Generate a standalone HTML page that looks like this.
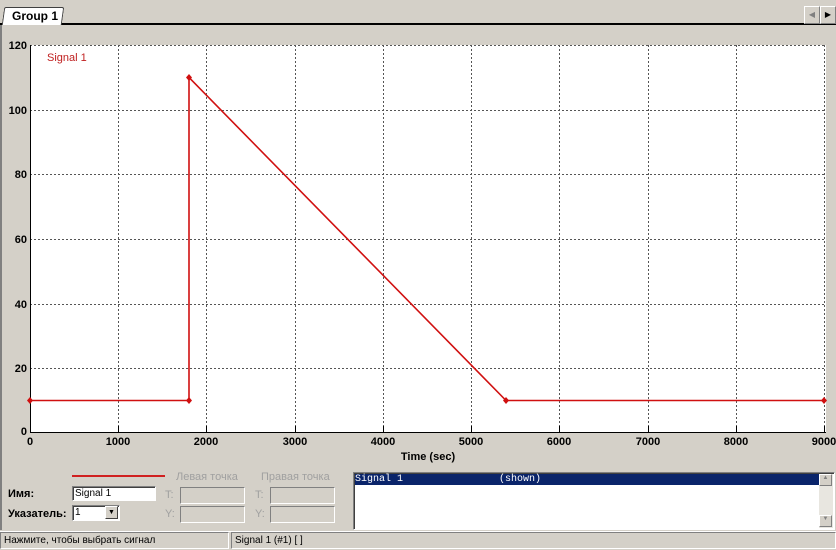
<!DOCTYPE html>
<html><head><meta charset="utf-8"><style>
body{margin:0;width:836px;height:550px;background:#d4d0c8;font-family:"Liberation Sans",sans-serif;position:relative;overflow:hidden;font-size:11px}
.a{position:absolute}
.in{background:#fff;border:1px solid #808080;border-right-color:#fff;border-bottom-color:#fff;box-shadow:inset 1px 1px 0 #404040}
.dis{background:#d4d0c8;border:1px solid #808080;border-right-color:#fff;border-bottom-color:#fff}
.g{color:#a0a0a0}
</style></head><body>
<div class="a" style="left:0;top:0;width:836px;height:24px;background:#d4d0c8"></div>
<div class="a" style="left:0;top:23px;width:836px;height:2px;background:#000"></div>
<div class="a" style="left:3px;top:7px;width:58px;height:17px;background:#fff;border:1px solid #404040;border-bottom:none;border-radius:2px 2px 0 0;transform:skewX(-8deg)"></div>
<div class="a" style="left:12px;top:9px;font-weight:bold;font-size:12px">Group 1</div>
<div class="a" style="left:804px;top:6px;width:14px;height:16px;background:#d4d0c8;border:1px solid #fff;border-right-color:#808080;border-bottom-color:#808080;font-size:8px;color:#808080;text-align:center;line-height:16px">◀</div>
<div class="a" style="left:820px;top:6px;width:14px;height:16px;background:#d4d0c8;border:1px solid #fff;border-right-color:#808080;border-bottom-color:#808080;font-size:8px;text-align:center;line-height:16px">▶</div>
<div class="a" style="left:0;top:25px;width:2px;height:505px;background:#808080"></div>
<svg class="a" style="left:0;top:25px" width="836" height="445">
<g font-family="Liberation Sans" font-weight="bold" font-size="11" fill="#000">
<rect x="30" y="20" width="796" height="388" fill="#fff"/>
<g stroke="#555" stroke-dasharray="2,2" stroke-width="1">
<line x1="30" y1="20.5" x2="826" y2="20.5"/><line x1="30" y1="85.5" x2="826" y2="85.5"/><line x1="30" y1="149.5" x2="826" y2="149.5"/><line x1="30" y1="214.5" x2="826" y2="214.5"/><line x1="30" y1="279.5" x2="826" y2="279.5"/><line x1="30" y1="343.5" x2="826" y2="343.5"/>
<line x1="118.5" y1="20" x2="118.5" y2="408"/><line x1="206.5" y1="20" x2="206.5" y2="408"/><line x1="295.5" y1="20" x2="295.5" y2="408"/><line x1="383.5" y1="20" x2="383.5" y2="408"/><line x1="471.5" y1="20" x2="471.5" y2="408"/><line x1="559.5" y1="20" x2="559.5" y2="408"/><line x1="648.5" y1="20" x2="648.5" y2="408"/><line x1="736.5" y1="20" x2="736.5" y2="408"/><line x1="824.5" y1="20" x2="824.5" y2="408"/>
</g>
<g stroke="#000"><line x1="118.5" y1="401" x2="118.5" y2="408"/><line x1="206.5" y1="401" x2="206.5" y2="408"/><line x1="295.5" y1="401" x2="295.5" y2="408"/><line x1="383.5" y1="401" x2="383.5" y2="408"/><line x1="471.5" y1="401" x2="471.5" y2="408"/><line x1="559.5" y1="401" x2="559.5" y2="408"/><line x1="648.5" y1="401" x2="648.5" y2="408"/><line x1="736.5" y1="401" x2="736.5" y2="408"/><line x1="824.5" y1="401" x2="824.5" y2="408"/></g>
<line x1="30.5" y1="20" x2="30.5" y2="408" stroke="#000"/><line x1="30" y1="407.5" x2="826" y2="407.5" stroke="#000"/>
<text x="27" y="24" text-anchor="end">120</text><text x="27" y="89" text-anchor="end">100</text><text x="27" y="153" text-anchor="end">80</text><text x="27" y="218" text-anchor="end">60</text><text x="27" y="283" text-anchor="end">40</text><text x="27" y="347" text-anchor="end">20</text><text x="27" y="410" text-anchor="end">0</text>
<g text-anchor="middle"><text x="30" y="420">0</text><text x="118" y="420">1000</text><text x="206" y="420">2000</text><text x="295" y="420">3000</text><text x="383" y="420">4000</text><text x="471" y="420">5000</text><text x="559" y="420">6000</text><text x="648" y="420">7000</text><text x="736" y="420">8000</text><text x="824" y="420">9000</text>
<text x="428" y="435">Time (sec)</text></g>
</g>
<text x="47" y="36" font-family="Liberation Sans" font-size="11" fill="#c02020">Signal 1</text>
<polyline points="30,375.5 189,375.5 189,52.5 506,375.5 824,375.5" fill="none" stroke="#d01010" stroke-width="1.6"/>
<g fill="#d01010"><path d="M30 372l3 3.5-3 3.5-3-3.5z"/><path d="M189 372l3 3.5-3 3.5-3-3.5z"/><path d="M189 49l3 3.5-3 3.5-3-3.5z"/><path d="M506 372l3 3.5-3 3.5-3-3.5z"/><path d="M824 372l3 3.5-3 3.5-3-3.5z"/></g>
</svg>
<div class="a" style="left:72px;top:475px;width:93px;height:2px;background:#d02020"></div>
<div class="a g" style="left:176px;top:471px">Левая точка</div>
<div class="a g" style="left:261px;top:471px">Правая точка</div>
<div class="a" style="left:8px;top:488px;font-weight:bold">Имя:</div>
<div class="a" style="left:8px;top:508px;font-weight:bold">Указатель:</div>
<div class="a in" style="left:72px;top:486px;width:80px;height:13px;font-size:10px;line-height:13px;padding-left:2px">Signal 1</div>
<div class="a in" style="left:72px;top:505px;width:44px;height:14px;font-size:10px;line-height:14px;padding-left:2px">1<div class="a" style="right:1px;top:0;width:13px;height:13px;background:#d4d0c8;border:1px solid #fff;border-right-color:#404040;border-bottom-color:#404040;box-sizing:border-box;font-size:7px;text-align:center;line-height:12px">▼</div></div>
<div class="a g" style="left:165px;top:489px">T:</div><div class="a g" style="left:165px;top:508px">Y:</div>
<div class="a g" style="left:255px;top:489px">T:</div><div class="a g" style="left:255px;top:508px">Y:</div>
<div class="a dis" style="left:180px;top:487px;width:63px;height:15px"></div>
<div class="a dis" style="left:180px;top:506px;width:63px;height:15px"></div>
<div class="a dis" style="left:270px;top:487px;width:63px;height:15px"></div>
<div class="a dis" style="left:270px;top:506px;width:63px;height:15px"></div>
<div class="a in" style="left:353px;top:472px;width:480px;height:56px"></div>
<div class="a" style="left:355px;top:474px;width:464px;height:11px;background:#0a246a;color:#fff;font-family:'Liberation Mono',monospace;font-size:10px;line-height:11px;white-space:pre">Signal 1                (shown)</div>
<div class="a" style="left:819px;top:474px;width:14px;height:54px;background:#e8e6e0"></div>
<div class="a" style="left:819px;top:474px;width:13px;height:12px;background:#d4d0c8;border:1px solid #fff;border-right-color:#808080;border-bottom-color:#808080;box-sizing:border-box;font-size:6px;color:#808080;text-align:center">▲</div>
<div class="a" style="left:819px;top:515px;width:13px;height:12px;background:#d4d0c8;border:1px solid #fff;border-right-color:#808080;border-bottom-color:#808080;box-sizing:border-box;font-size:6px;color:#808080;text-align:center">▼</div>
<div class="a" style="left:0;top:531px;width:836px;height:1px;background:#fff"></div>
<div class="a" style="left:0;top:532px;width:229px;height:17px;border:1px solid #808080;border-right-color:#fff;border-bottom-color:#fff;box-sizing:border-box;font-size:10px;line-height:15px;padding-left:3px">Нажмите, чтобы выбрать сигнал</div>
<div class="a" style="left:231px;top:532px;width:605px;height:17px;border:1px solid #808080;border-right-color:#fff;border-bottom-color:#fff;box-sizing:border-box;font-size:10px;line-height:15px;padding-left:3px">Signal 1 (#1) [ ]</div>
</body></html>
